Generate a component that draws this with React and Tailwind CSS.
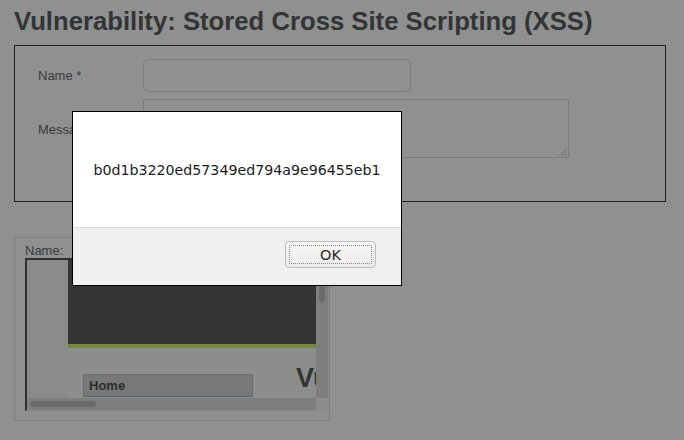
import React from "react";

export default function App() {
  return (
    <div className="relative w-[684px] h-[440px] overflow-hidden bg-[#8f9090] font-['Liberation_Sans',Arial,sans-serif] text-[#3a3b3b]">
      <div className="px-[14px] pt-[6px]">
        <h1 className="text-[25.7px] leading-[30px] font-bold text-[#333435] font-['Liberation_Sans',Arial,sans-serif] whitespace-nowrap">
          Vulnerability: Stored Cross Site Scripting (XSS)
        </h1>

        {/* form box */}
        <div className="mt-[9px] h-[157px] w-[652px] border border-[#1f2020] pl-[23px] pt-[13px]">
          <div className="flex items-center h-[33px]">
            <div className="w-[105px] text-[13px]">Name *</div>
            <div className="w-[268px] h-[33px] rounded-[5px] border border-[#7b7c7c] bg-[#8f9090]" />
          </div>
          <div className="flex mt-[7px]">
            <div className="w-[105px] text-[13px] pt-[21px]">Message *</div>
            <div className="relative w-[426px] h-[59px] border border-[#7b7c7c] bg-[#8f9090]">
              <svg className="absolute right-0 bottom-0" width="12" height="12" viewBox="0 0 12 12">
                <path d="M11 3 L3 11 M11 6 L6 11 M11 9 L9 11" stroke="#6e6f6f" strokeWidth="1" />
              </svg>
            </div>
          </div>
          <div className="flex mt-[6px] pl-[180px]">
            <div className="w-[114px] h-[25px] rounded-[5px] border border-[#7b7c7c] bg-[#8a8b8b] text-[13px] flex items-center justify-center">
              Sign Guestbook
            </div>
          </div>
        </div>

        {/* guestbook entry */}
        <div className="mt-[35px] w-[316px] h-[184px] border border-[#7e7f7f] pl-[10px] pt-[5px]">
          <div className="text-[13px] leading-[15px]">Name:</div>
          <div className="w-[304px] h-[153px] border-t-2 border-l-2 border-t-[#2e2f2f] border-l-[#2e2f2f] border-b border-r border-b-[#888989] border-r-[#888989] flex flex-col">
            <div className="flex flex-1 min-h-0">
              <div className="w-[41px] shrink-0 bg-[#8a8b8b]" />
              <div className="flex-1 min-w-0 flex flex-col overflow-hidden">
                <div className="h-[84px] shrink-0 bg-[#333435]" />
                <div className="h-[4px] shrink-0 bg-[#76883a]" />
                <div className="flex-1 flex items-start pt-[26px] pl-[15px] bg-[#8c8d8d]">
                  <div className="w-[170px] shrink-0 h-[23px] bg-[#777878] border border-[#6c6d6d] border-b-[#5a6478] text-[13px] font-bold text-[#2b2c2c] pl-[5px] leading-[21px]">
                    Home
                  </div>
                  <div className="shrink-0 ml-[43px] -mt-[12px] text-[27px] font-bold text-[#323333] whitespace-nowrap leading-[32px]">
                    Vulnerability
                  </div>
                </div>
              </div>
              <div className="w-[12px] shrink-0 bg-[#7d7e7e] relative">
                <div className="absolute left-[3px] top-[19px] w-[6px] h-[23px] rounded-full bg-[#6a6b6b]" />
              </div>
            </div>
            <div className="flex h-[12px] shrink-0">
              <div className="flex-1 bg-[#7d7e7e] relative">
                <div className="absolute left-[3px] top-[3px] w-[66px] h-[6px] rounded-full bg-[#6a6b6b]" />
              </div>
              <div className="w-[12px] bg-[#8c8d8d]" />
            </div>
          </div>
        </div>
      </div>

      {/* alert dialog */}
      <div className="absolute left-[72px] top-[111px] w-[330px] h-[175px] border border-black flex flex-col font-['DejaVu_Sans',sans-serif]">
        <div className="h-[116px] bg-white border-b border-[#dcdcdc] flex items-center justify-center text-[14.2px] text-[#1c1c1c] pt-[2px]">
          b0d1b3220ed57349ed794a9e96455eb1
        </div>
        <div className="flex-1 bg-[#f0f0f0] flex justify-end items-start pt-[13px] pr-[25px]">
          <div className="w-[91px] h-[27px] rounded-[4px] border border-[#c3bdb5] bg-gradient-to-b from-[#f8f8f7] to-[#ebeae8] p-[3px]">
            <div className="w-full h-full border border-dotted border-[#8a8a8a] flex items-center justify-center text-[14.5px] text-[#2a2a2a] pt-[2px]">
              OK
            </div>
          </div>
        </div>
      </div>
    </div>
  );
}
